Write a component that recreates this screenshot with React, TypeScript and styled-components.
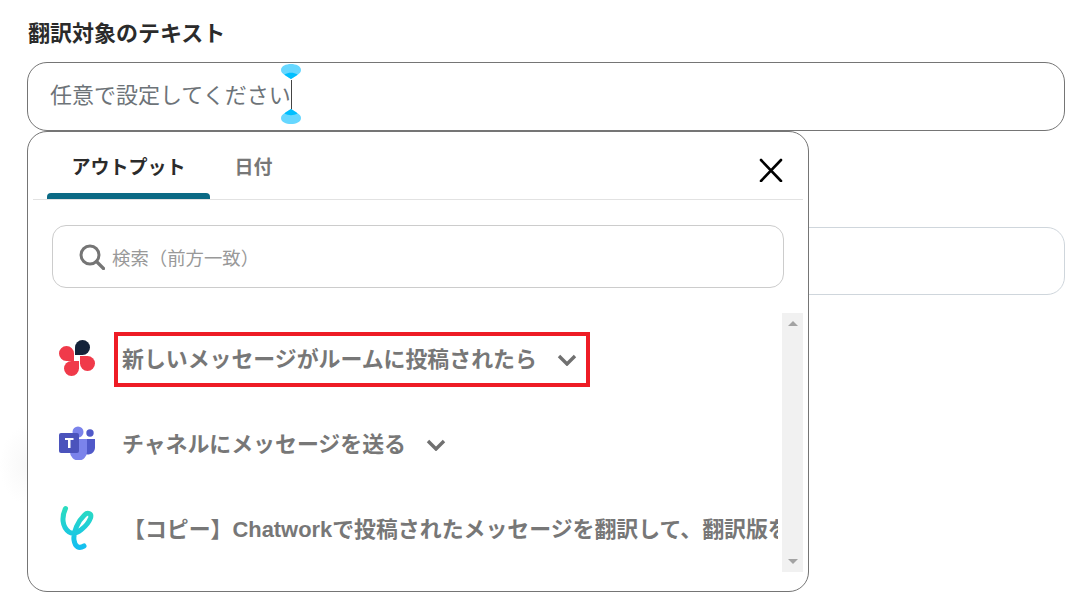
import styled, { createGlobalStyle } from 'styled-components';

const GlobalStyle = createGlobalStyle`
  html, body {
    margin: 0;
    padding: 0;
    background: #fff;
  }
  body {
    font-family: 'Liberation Sans', 'Noto Sans CJK JP', sans-serif;
    overflow: hidden;
  }
`;

const rows = [
  { id: 'chatwork', title: '新しいメッセージがルームに投稿されたら', marked: true },
  { id: 'teams', title: 'チャネルにメッセージを送る', marked: false },
];

const ChatworkLogo = () => (
  <svg width="36" height="36" viewBox="0 0 36 36">
    <path d="M16 15V7.500A7.500 7.500 0 1 1 23.500 15Z" fill="#14233a" />
    <path d="M15 21H7.500A7.500 7.500 0 1 1 15 13.500Z" fill="#f03a4a" />
    <path d="M21 16H28.500A7.500 7.500 0 1 1 21 23.500Z" fill="#f03a4a" />
    <path d="M20 21V28.500A7.500 7.500 0 1 1 12.500 21Z" fill="#f03a4a" />
  </svg>
);

const TeamsLogo = () => (
  <svg width="36" height="34" viewBox="0 0 36 34">
    <circle cx="19" cy="6" r="5.500" fill="#7b83eb" />
    <circle cx="31" cy="7" r="3.700" fill="#5059c9" />
    <path d="M23 13h13v9a7 7 0 0 1-13 3z" fill="#5059c9" />
    <path d="M11 13h17v13a8.500 8.500 0 0 1-17 0z" fill="#7b83eb" />
    <rect y="7" width="20" height="20" rx="2" fill="#4b53bc" />
    <path d="M6 12h8.500v2h-3v8H9v-8H6z" fill="#fff" />
  </svg>
);

const YoomLogo = () => (
  <svg width="36" height="46" viewBox="0 0 36 46">
    <defs>
      <linearGradient id="yoomGrad" x1="0" y1="0" x2="0" y2="1">
        <stop offset="0" stopColor="#2adcc0" />
        <stop offset="1" stopColor="#14bff0" />
      </linearGradient>
    </defs>
    <path
      d="M6.500 3.500C2.500 12 3 22 10 27C17 32 29 20 31.500 13C33 8 28.500 7 25.500 10C19 16 14 27 15 35C16 42 20 44 25 41"
      fill="none"
      stroke="url(#yoomGrad)"
      strokeWidth="5"
      strokeLinecap="round"
    />
  </svg>
);

const SelectionHandle = ({ bottom }: { bottom?: boolean }) => (
  <Handle $bottom={bottom} width="20" height="16" viewBox="0 0 20 16">
    <path d="M10 16C6 13 0 11 0 7C0 3 5 1 10 1C15 1 20 3 20 7C20 11 14 13 10 16Z" fill="#66d7ff" />
    <path d="M10 16C8 14.500 5 13.200 3.500 11.500C5.500 10.300 7.800 9.800 10 9.800C12.200 9.800 14.500 10.300 16.500 11.500C15 13.200 12 14.500 10 16Z" fill="#00bfff" />
  </Handle>
);

const App = () => {
  return (
    <>
      <GlobalStyle />
      <Page>
        <SideGlow />
        <FieldLabel>翻訳対象のテキスト</FieldLabel>
        <TextBox>
          <Placeholder>任意で設定してください</Placeholder>
          <Caret>
            <SelectionHandle />
            <SelectionHandle bottom />
          </Caret>
        </TextBox>
        <LowerBox />

        <Popup>
          <TabBar>
            <Tab $active>アウトプット</Tab>
            <Tab>日付</Tab>
            <CloseButton>
              <svg width="24" height="24" viewBox="0 0 24 24">
                <path d="M2 2l20 21M22 2L2 23" stroke="#000" strokeWidth="2.600" strokeLinecap="round" />
              </svg>
            </CloseButton>
          </TabBar>
          <SearchBox>
            <svg width="26" height="26" viewBox="0 0 26 26">
              <circle cx="11" cy="11" r="9" fill="none" stroke="#757575" strokeWidth="3" />
              <path d="M17.500 17.500l7 7" stroke="#757575" strokeWidth="3.200" strokeLinecap="round" />
            </svg>
            <SearchHint>検索（前方一致）</SearchHint>
          </SearchBox>
          <ListArea>
            <List>
              {rows.map((row) => (
                <Row key={row.id}>
                  <LogoSlot>{row.id === 'chatwork' ? <ChatworkLogo /> : <TeamsLogo />}</LogoSlot>
                  <RowTitle>{row.title}</RowTitle>
                  <svg width="22" height="12" viewBox="0 0 22 12">
                    <path d="M3 2l8 8 8-8" fill="none" stroke="#707070" strokeWidth="3.400" />
                  </svg>
                  {row.marked && <RedMark />}
                </Row>
              ))}
              <Row>
                <LogoSlot>
                  <YoomLogo />
                </LogoSlot>
                <CopyTitle>【コピー】Chatworkで投稿されたメッセージを翻訳して、翻訳版を送信する</CopyTitle>
              </Row>
            </List>
            <ScrollTrack>
              <Arrow />
              <Arrow $down />
            </ScrollTrack>
          </ListArea>
        </Popup>
      </Page>
    </>
  );
};

export default App;

const Page = styled.div`
  position: relative;
  width: 1081px;
  height: 610px;
  padding: 18px 16px 0 27px;
  box-sizing: border-box;
  overflow: hidden;
`;

const SideGlow = styled.div`
  position: absolute;
  left: 0;
  top: 425px;
  width: 54px;
  height: 80px;
  background: radial-gradient(closest-side, #f8f8f8, #fff);
`;

const FieldLabel = styled.div`
  margin-left: 1px;
  height: 32px;
  font-size: 22px;
  line-height: 32px;
  font-weight: 700;
  color: #2b2b2b;
`;

const TextBox = styled.div`
  display: flex;
  align-items: center;
  height: 69px;
  margin-top: 12px;
  padding: 0 22px;
  box-sizing: border-box;
  border: 1px solid #757575;
  border-radius: 20px;
`;

const Placeholder = styled.span`
  font-size: 22px;
  line-height: 30px;
  margin-top: -2px;
  color: #6d7378;
`;

const Caret = styled.span`
  position: relative;
  width: 1px;
  height: 30px;
  margin-top: -3px;
  background: #444;
`;

const Handle = styled.svg<{ $bottom?: boolean }>`
  position: absolute;
  left: -10px;
  ${({ $bottom }) => ($bottom ? 'bottom: -15px; transform: scaleY(-1);' : 'top: -17px;')}
`;

const LowerBox = styled.div`
  height: 68px;
  margin-top: 96px;
  border: 1px solid #cfd6dc;
  border-radius: 18px;
  box-sizing: border-box;
`;

const Popup = styled.div`
  position: absolute;
  left: 27px;
  top: 131px;
  width: 782px;
  height: 461px;
  box-sizing: border-box;
  padding: 0 5px;
  background: #fff;
  border: 1px solid #757575;
  border-radius: 20px;
`;

const TabBar = styled.div`
  display: flex;
  align-items: flex-start;
  height: 67px;
  border-bottom: 1px solid #e2e2e2;
  padding-left: 14px;
`;

const Tab = styled.div<{ $active?: boolean }>`
  position: relative;
  height: 67px;
  padding: 0 24.500px;
  font-size: 19px;
  line-height: 72px;
  font-weight: 700;
  color: ${({ $active }) => ($active ? '#2b2b2b' : '#777')};

  &::after {
    content: '';
    display: ${({ $active }) => ($active ? 'block' : 'none')};
    position: absolute;
    left: 0;
    right: 0;
    bottom: 0;
    height: 6px;
    border-radius: 4px 4px 0 0;
    background: #0b6a85;
  }
`;

const CloseButton = styled.div`
  margin: 26px 20px 0 auto;
  height: 24px;
`;

const SearchBox = styled.div`
  display: flex;
  align-items: center;
  gap: 7px;
  height: 63px;
  margin: 25px 19px 0;
  padding-left: 26px;
  box-sizing: border-box;
  border: 1px solid #ccc;
  border-radius: 14px;
`;

const SearchHint = styled.span`
  font-size: 18.400px;
  color: #999;
`;

const ListArea = styled.div`
  display: flex;
  height: 259px;
  margin-top: 25px;
`;

const List = styled.div`
  flex: 1;
  min-width: 0;
  display: flex;
  flex-direction: column;
  overflow: hidden;
  margin-right: 4px;
`;

const Row = styled.div`
  position: relative;
  display: flex;
  align-items: center;
  flex: none;
  height: 85px;
  padding-left: 26px;
  &:first-child {
    margin-top: 4px;
  }
`;

const LogoSlot = styled.div`
  flex: none;
  width: 36px;
  display: flex;
  justify-content: center;
  margin: 0 27px 3px 0;
`;

const RowTitle = styled.span`
  margin-right: 19px;
  font-size: 21.900px;
  line-height: 30px;
  font-weight: 700;
  color: #777;
  white-space: nowrap;
`;

const CopyTitle = styled(RowTitle)`
  margin-left: 1px;
`;

const RedMark = styled.div`
  position: absolute;
  left: 81px;
  top: 15px;
  width: 476px;
  height: 55px;
  box-sizing: border-box;
  border: 4px solid #ee1c25;
`;

const ScrollTrack = styled.div`
  flex: none;
  width: 21px;
  display: flex;
  flex-direction: column;
  justify-content: space-between;
  align-items: center;
  padding: 8px 0;
  box-sizing: border-box;
  background: #f1f1f1;
`;

const Arrow = styled.i<{ $down?: boolean }>`
  width: 0;
  height: 0;
  border-left: 5px solid transparent;
  border-right: 5px solid transparent;
  ${({ $down }) => ($down ? 'border-top: 5px solid #a3a3a3;' : 'border-bottom: 5px solid #a3a3a3;')}
`;
